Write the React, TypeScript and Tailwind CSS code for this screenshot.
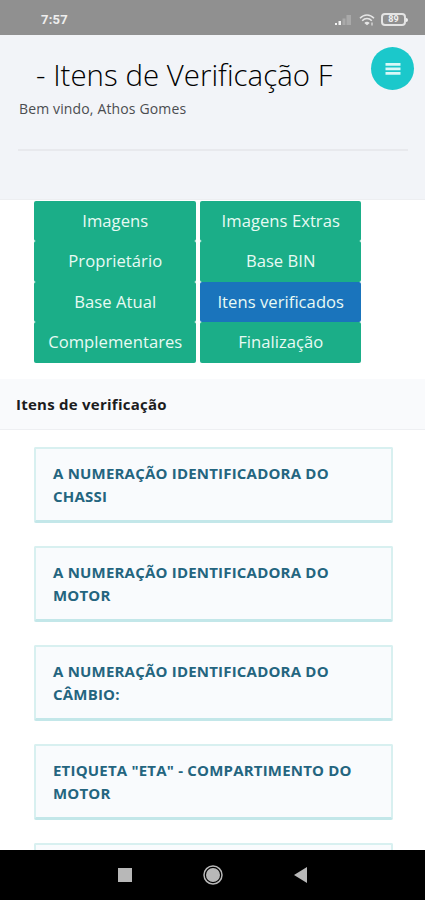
import clsx from "clsx";

interface Tab {
  label: string;
  active?: boolean;
}

const tabs: Tab[] = [
  { label: "Imagens" },
  { label: "Imagens Extras" },
  { label: "Proprietário" },
  { label: "Base BIN" },
  { label: "Base Atual" },
  { label: "Itens verificados", active: true },
  { label: "Complementares" },
  { label: "Finalização" },
];

const items = [
  "A NUMERAÇÃO IDENTIFICADORA DO CHASSI",
  "A NUMERAÇÃO IDENTIFICADORA DO MOTOR",
  "A NUMERAÇÃO IDENTIFICADORA DO CÂMBIO:",
  'ETIQUETA "ETA" - COMPARTIMENTO DO MOTOR',
  "",
];

function StatusBar() {
  return (
    <div className="flex h-[35px] shrink-0 items-center justify-between bg-[#909090] pt-1 pr-[17px] pl-[41px]">
      <span className="font-['Roboto',sans-serif] text-[13px] font-bold tracking-[0.2px] text-[#eeeeee]">7:57</span>
      <div className="flex items-center">
        <svg className="h-3 w-4" viewBox="0 0 16 12">
          <path d="M0 11V9h2v2zM3.500 11V7h2.500v4z" fill="#f2f2f2" />
          <path d="M7.500 11V4.500h3V11zM11.500 11V1H16v10z" fill="#a9a9a9" />
        </svg>
        <svg className="ml-2 h-3 w-4" viewBox="0 0 16 12" fill="none" stroke="#e6e6e6" strokeWidth="1.500">
          <path d="M1 4.200C5-.2 11-.2 15 4.200" />
          <path d="M3.200 6.800c2.800-3 6.800-3 9.600 0" />
          <path d="M5.300 9c1.600-1.700 3.800-1.700 5.400 0L8 11.200z" fill="#e6e6e6" stroke="none" />
          <path d="M13 8.500v3" strokeWidth="1.200" />
        </svg>
        <div className="ml-1.5 flex items-center">
          <span className="flex h-[13px] w-[25px] items-center justify-center rounded-[4px] border-2 border-[#e4e4e4] font-['Roboto',sans-serif] text-[9px] leading-none font-bold text-[#f0f0f0]">
            89
          </span>
          <span className="h-1 w-0.5 rounded-r bg-[#f0f0f0]" />
        </div>
      </div>
    </div>
  );
}

function Header() {
  return (
    <header className="h-[165px] shrink-0 border-b border-[#edeef1] bg-[#f2f4f8] px-[18px]">
      <div className="flex justify-between">
        <h1 className="mt-[21px] ml-[18px] text-[29.4px] leading-[38px] font-light tracking-[0.03px] whitespace-nowrap text-black">
          - Itens de Verificação F
        </h1>
        <button className="mt-3 -mr-[7px] flex size-[43px] shrink-0 items-center justify-center rounded-full bg-[#1bc8cb]">
          <svg className="h-3.5 w-4" viewBox="0 0 16 14" fill="#d9f8f8">
            <path d="M.5 1h15v2.800H.5zM.5 5.500h15v2.800H.5zM.5 10h15v2.800H.5z" />
          </svg>
        </button>
      </div>
      <p className="mt-[3px] pl-px text-sm leading-6 tracking-[0.14px] text-[#4b4d50]">Bem vindo, Athos Gomes</p>
      <hr className="mt-7 -mr-px border-t-2 border-[#e8e9ed]" />
    </header>
  );
}

function Tabs() {
  return (
    <div className="grid w-[361px] shrink-0 grid-cols-2 gap-x-1 pt-px pl-[34px]">
      {tabs.map((tab) => (
        <button
          key={tab.label}
          className={clsx(
            "h-[40.4px] rounded-[2px] pl-px text-[16.6px] tracking-[0.05px] whitespace-nowrap text-[#e8faf4]",
            tab.active ? "bg-[#1a74bc]" : "bg-[#1bae88]"
          )}
        >
          {tab.label}
        </button>
      ))}
    </div>
  );
}

export default function App() {
  return (
    <div className="flex h-[900px] w-[425px] flex-col overflow-hidden bg-white font-['Open_Sans',sans-serif]">
      <StatusBar />
      <Header />
      <Tabs />
      <h2 className="mt-4 flex h-[51px] shrink-0 items-center border-b border-[#eeeff2] bg-[#f9fafc] pt-0.5 pl-4 text-[15px] font-bold tracking-[0.25px] text-[#1c1c1e]">
        Itens de verificação
      </h2>
      <main className="flex min-h-0 flex-1 flex-col gap-[23px] overflow-hidden pt-[17px] pr-8 pl-[34px]">
        {items.map((item) => (
          <div
            key={item}
            className="h-[76px] shrink-0 rounded-[2px] border-2 border-b-[3px] border-[#d8f0f0] border-b-[#c3e7e9] bg-[#f9fbfd] px-[17px] pt-[13px] text-[15px] leading-[23.5px] font-bold tracking-[0.2px] text-[#24657f]"
          >
            {item}
          </div>
        ))}
      </main>
      <nav className="flex h-[50px] shrink-0 items-center bg-black pl-[118px]">
        <span className="size-3.5 bg-[#b8b8b8]" />
        <svg className="ml-[71px] size-5" viewBox="0 0 20 20">
          <circle cx="10" cy="10" r="9" fill="none" stroke="#b8b8b8" strokeWidth="1.500" />
          <circle cx="10" cy="10" r="7" fill="#b8b8b8" />
        </svg>
        <svg className="ml-[71px] h-4 w-3.5" viewBox="0 0 14 16">
          <path d="M13 0v16L0 8z" fill="#b8b8b8" />
        </svg>
      </nav>
    </div>
  );
}
